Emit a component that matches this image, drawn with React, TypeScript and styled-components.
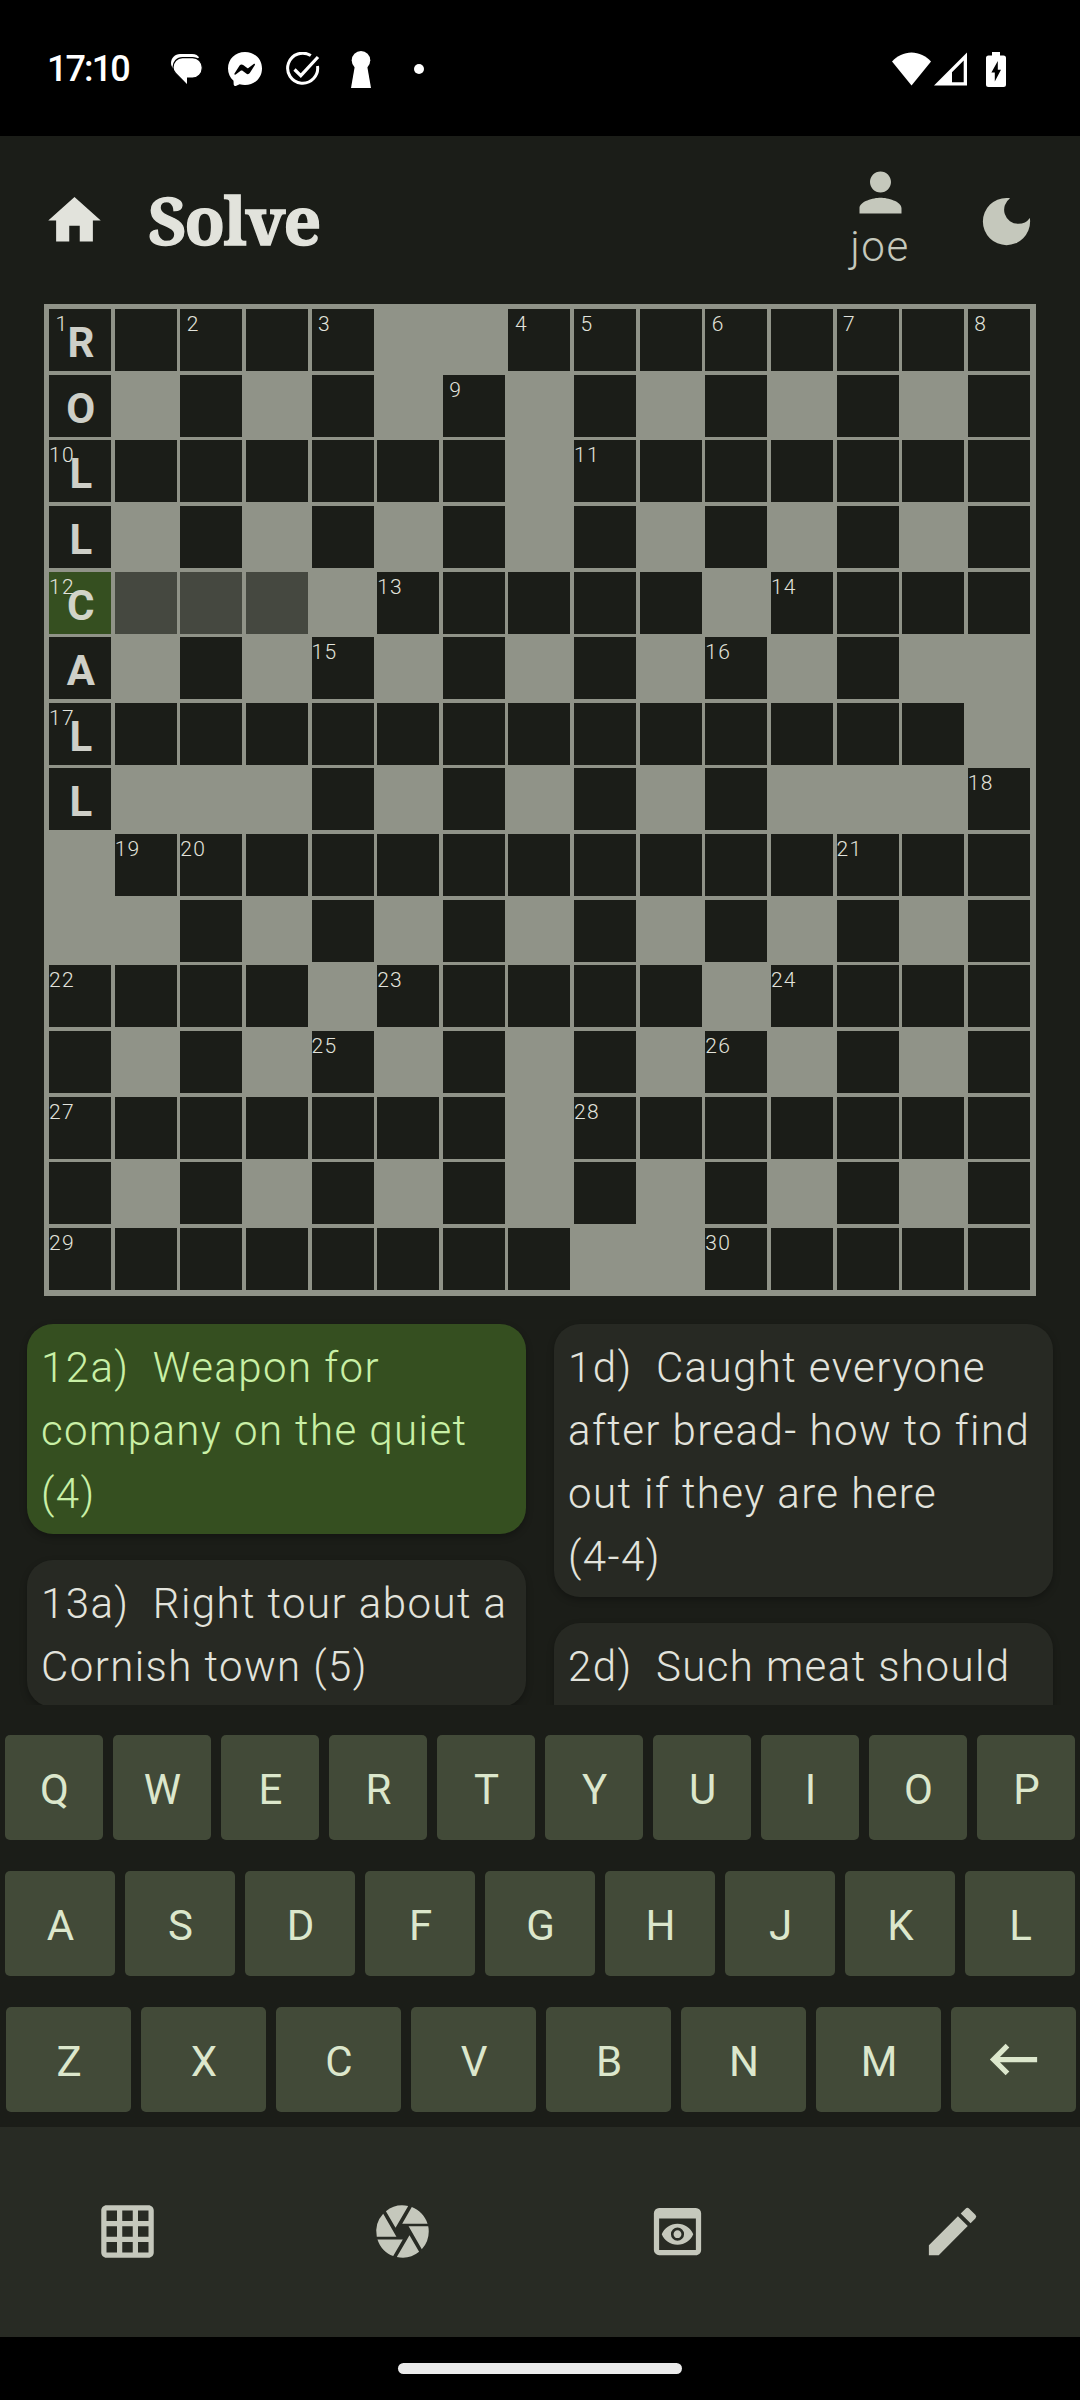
import React from 'react';
import styled, { createGlobalStyle } from 'styled-components';
import {
  MdCamera,
  MdDarkMode,
  MdEdit,
  MdGridOn,
  MdHome,
  MdKeyboardBackspace,
  MdPerson,
  MdPreview,
} from 'react-icons/md';

const color = {
  page: '#1b1d18',
  bar: '#282b24',
  card: '#272923',
  text: '#e2e3dc',
  muted: '#c5c8bc',
  outline: '#909388',
  lit: '#454840',
  selected: '#354f20',
  selectedText: '#c9f0a6',
  key: '#424a38',
  keyText: '#dce7cc',
};

const GlobalStyle = createGlobalStyle`
  * { box-sizing: border-box; }
  body { margin: 0; background: #000; }
`;

const Screen = styled.div`
  display: flex;
  flex-direction: column;
  width: 1080px;
  height: 2400px;
  overflow: hidden;
  background: ${color.page};
  color: ${color.text};
  font-family: Roboto, 'Liberation Sans', sans-serif;
`;

const StatusBar = styled.div`
  display: flex;
  align-items: center;
  justify-content: space-between;
  height: 136px;
  padding: 2px 74px 0 47px;
  background: #000;
  color: #fff;
`;

const StatusGroup = styled.div`
  display: flex;
  align-items: center;
`;

const Clock = styled.span`
  width: 124px;
  font-size: 36px;
  font-weight: 500;
  line-height: 42px;
  letter-spacing: -1.9px;
`;

const Glyph = styled.svg<{ $w: number; $h: number; $gap?: number }>`
  display: block;
  flex: none;
  width: ${(p) => p.$w}px;
  height: ${(p) => p.$h}px;
  margin-left: ${(p) => p.$gap ?? 0}px;
`;

const AppBar = styled.header`
  display: flex;
  align-items: center;
  height: 168px;
  padding: 0 42px 0 43px;
`;

const Title = styled.h1`
  flex: 1;
  margin: 0 0 0 42px;
  padding-bottom: 3px;
  font-family: 'Noto Serif', 'DejaVu Serif Condensed', 'DejaVu Serif', serif;
  font-stretch: condensed;
  font-size: 66px;
  font-weight: 700;
  line-height: 84px;
  letter-spacing: -1.6px;
  -webkit-text-stroke: 1.4px ${color.text};
`;

const Account = styled.div`
  display: flex;
  flex-direction: column;
  align-items: center;
  margin-right: 63px;
  padding-bottom: 11px;
  color: ${color.muted};
  font-size: 42px;
  font-weight: 300;
  letter-spacing: 1.6px;
  line-height: 45px;
`;

const UserName = styled.span`
  padding-right: 1px;
`;

const Moon = styled.div`
  display: flex;
  padding-top: 3px;
  color: ${color.muted};
`;

const Board = styled.div`
  display: grid;
  flex: none;
  grid-template-columns: repeat(15, 65.625px);
  grid-template-rows: repeat(15, 65.625px);
  width: 992px;
  height: 992px;
  margin-left: 44px;
  padding: 5px;
  background: ${color.outline};
`;

type Tone = 'plain' | 'lit' | 'selected';
const toneFill: Record<Tone, string> = {
  plain: color.page,
  lit: color.lit,
  selected: color.selected,
};

const Cell = styled.div<{ $tone: Tone }>`
  position: relative;
  width: 62px;
  height: 62px;
  background: ${(p) => toneFill[p.$tone]};
`;

const CellNumber = styled.span`
  position: absolute;
  left: 0;
  top: 2px;
  width: 26px;
  text-align: center;
  font-size: 21px;
  font-weight: 300;
  letter-spacing: 1.3px;
  line-height: 26px;
`;

const CellLetter = styled.span`
  display: block;
  padding: 3px 0 0 3px;
  text-align: center;
  font-size: 42px;
  font-weight: 700;
  line-height: 62px;
  letter-spacing: 1.3px;
  opacity: 0.9;
`;

const Clues = styled.section`
  display: grid;
  flex: none;
  grid-template-columns: 499px 499px;
  column-gap: 28px;
  height: 409px;
  padding: 28px 27px 0;
  overflow: hidden;
`;

const ClueColumn = styled.div`
  display: flex;
  flex-direction: column;
  gap: 26px;
`;

const Clue = styled.article<{ $selected?: boolean; $lines: number }>`
  flex: none;
  height: ${(p) => p.$lines * 63 + 21}px;
  padding: 12px 8px 9px 14px;
  border-radius: 26px;
  background: ${(p) => (p.$selected ? color.selected : color.card)};
  color: ${(p) => (p.$selected ? color.selectedText : color.text)};
  box-shadow: 0 3px 7px rgba(0, 0, 0, 0.28);
  font-size: 42px;
  font-weight: 300;
  letter-spacing: 1.42px;
  line-height: 63px;
  white-space: pre-wrap;
`;

const Keyboard = styled.div`
  display: flex;
  flex-direction: column;
  flex: none;
  gap: 31px;
  height: 422px;
  padding-top: 30px;
`;

const KeyRow = styled.div<{ $inset: number }>`
  display: flex;
  gap: 10px;
  padding: 0 ${(p) => 10 - p.$inset}px 0 ${(p) => p.$inset}px;
`;

const Key = styled.button`
  display: flex;
  flex: 1;
  align-items: center;
  justify-content: center;
  height: 105px;
  padding: 4px 0 0;
  border: 0;
  border-radius: 5px;
  background: ${color.key};
  color: ${color.keyText};
  font: 400 42px/50px Roboto, 'Liberation Sans', sans-serif;
  text-indent: 1px;
`;

const BackKey = styled(Key)`
  padding: 0;
`;

const BottomBar = styled.nav`
  display: flex;
  flex: none;
  gap: 21px;
  height: 210px;
  background: ${color.bar};
  color: ${color.muted};
`;

const NavItem = styled.div`
  display: flex;
  flex: 1;
  align-items: center;
  justify-content: center;
  padding-bottom: 1px;
`;

const GestureArea = styled.div`
  display: flex;
  flex: none;
  align-items: center;
  justify-content: center;
  height: 63px;
  background: #000;
`;

const Handle = styled.div`
  width: 284px;
  height: 11px;
  border-radius: 6px;
  background: #ebebeb;
`;

const layout = [
  '.....##........',
  '.#.#.#.#.#.#.#.',
  '.......#.......',
  '.#.#.#.#.#.#.#.',
  '....#.....#....',
  '.#.#.#.#.#.#.##',
  '..............#',
  '.###.#.#.#.###.',
  '#..............',
  '##.#.#.#.#.#.#.',
  '....#.....#....',
  '.#.#.#.#.#.#.#.',
  '.......#.......',
  '.#.#.#.#.#.#.#.',
  '........##.....',
];

const letters = 'ROLLCALL';
const isOpen = (r: number, c: number) => layout[r]?.[c] === '.';

interface Square {
  open: boolean;
  number?: number;
  letter?: string;
  tone: Tone;
}

function buildSquares(): Square[] {
  let next = 1;
  const squares: Square[] = [];
  for (let r = 0; r < 15; r++) {
    for (let c = 0; c < 15; c++) {
      const open = isOpen(r, c);
      const startsAcross = open && !isOpen(r, c - 1) && isOpen(r, c + 1);
      const startsDown = open && !isOpen(r - 1, c) && isOpen(r + 1, c);
      squares.push({
        open,
        number: startsAcross || startsDown ? next++ : undefined,
        letter: c === 0 ? letters[r] : undefined,
        tone: r === 4 && c === 0 ? 'selected' : r === 4 && c < 4 ? 'lit' : 'plain',
      });
    }
  }
  return squares;
}

const squares = buildSquares();

function StatusIcons() {
  return (
    <>
      <Glyph $w={32} $h={31} viewBox="0 0 32 31">
        <path fill="#fff" d="M9 0H21C25 0 27 1.6 28 3.8L5 14 2.4 15C.8 13.200 0 11 0 9 0 4 4 0 9 0Z" />
        <path
          fill="#fff"
          stroke="#000"
          strokeWidth="1.200"
          d="M11.500 3.600H21.500C27 3.600 31.300 8 31.300 13.800S27 24 21.500 24H16.600V31.500L4.500 19.200C3 17.700 2 15.800 2 13.500 2 8 6 3.600 11.500 3.600Z"
        />
      </Glyph>
      <Glyph $w={34} $h={34} $gap={25} viewBox="0 0 34 34">
        <path fill="#fff" d="M17 0C7.300 0 0 7 0 16.500c0 5 2 9.200 5.500 12.200l.2 3.900c.1 1.100 1.100 1.700 2.100 1.300l3.800-1.600c1.700.5 3.500.7 5.400.7 9.700 0 17-7 17-16.500S26.700 0 17 0Z" />
        <path fill="#000" d="M6.500 21.500l5.100-7.900c.8-1.300 2.400-1.500 3.600-.6l4 3c.4.3.8.3 1.200 0l5.300-4c.8-.5 1.700.3 1.200 1.100l-5.100 7.900c-.8 1.300-2.400 1.500-3.600.6l-4-3c-.4-.3-.8-.3-1.200 0l-5.300 4c-.8.500-1.700-.3-1.200-1.100Z" />
      </Glyph>
      <Glyph $w={34} $h={34} $gap={24} viewBox="0 0 34 34">
        <path fill="none" stroke="#fff" strokeWidth="3" d="M24.800 3.600A15 15 0 1 0 31.500 14" />
        <path fill="none" stroke="#fff" strokeWidth="3.200" d="M8.500 17.500L14.800 23.700 32 5" />
      </Glyph>
      <Glyph $w={20} $h={37} $gap={31} viewBox="0 0 20 37">
        <circle cx="10" cy="9.300" r="9.300" fill="#fff" />
        <path fill="#fff" d="M4 14H16L20 37H0Z" />
      </Glyph>
      <Glyph $w={10} $h={10} $gap={43} viewBox="0 0 10 10">
        <circle cx="5" cy="5" r="5" fill="#fff" />
      </Glyph>
    </>
  );
}

function SystemIcons() {
  return (
    <>
      <Glyph $w={39} $h={34} viewBox="0 0 39 34">
        <path fill="#fff" d="M0 9.500C5 4 12 .5 19.500 .5S34 4 39 9.500L19.500 33.500Z" />
      </Glyph>
      <Glyph $w={33} $h={34} $gap={3} viewBox="0 0 33 34">
        <path fill="#fff" fillRule="evenodd" d="M33 .5V33.500H0ZM29.700 8.500L18 20.200V30.200H29.700Z" />
      </Glyph>
      <Glyph $w={20} $h={35} $gap={19} viewBox="0 0 20 35">
        <path fill="#fff" d="M6 0H14V3.500H17.500Q20 3.500 20 6V32.500Q20 35 17.500 35H2.500Q0 35 0 32.500V6Q0 3.500 2.500 3.500H6Z" />
        <path fill="#000" d="M11.800 9L5.400 20.500H8.800V29.500L15 17.700H11.800Z" />
      </Glyph>
    </>
  );
}

export default function App() {
  return (
    <Screen>
      <GlobalStyle />
      <StatusBar>
        <StatusGroup>
          <Clock>17:10</Clock>
          <StatusIcons />
        </StatusGroup>
        <StatusGroup>
          <SystemIcons />
        </StatusGroup>
      </StatusBar>

      <AppBar>
        <MdHome size={63} />
        <Title>Solve</Title>
        <Account>
          <MdPerson size={63} />
          <UserName>joe</UserName>
        </Account>
        <Moon>
          <MdDarkMode size={63} />
        </Moon>
      </AppBar>

      <Board>
        {squares.map((s, i) =>
          s.open ? (
            <Cell key={i} $tone={s.tone}>
              {s.letter && <CellLetter>{s.letter}</CellLetter>}
              {s.number && <CellNumber>{s.number}</CellNumber>}
            </Cell>
          ) : (
            <span key={i} />
          ),
        )}
      </Board>

      <Clues>
        <ClueColumn>
          <Clue $selected $lines={3}>{'12a)  Weapon for company on the quiet (4)'}</Clue>
          <Clue $lines={2}>{'13a)  Right tour about a Cornish town (5)'}</Clue>
        </ClueColumn>
        <ClueColumn>
          <Clue $lines={4}>{'1d)  Caught everyone after bread- how to find out if they are here\n(4-4)'}</Clue>
          <Clue $lines={3}>{'2d)  Such meat should'}</Clue>
        </ClueColumn>
      </Clues>

      <Keyboard>
        <KeyRow $inset={5}>
          {[...'QWERTYUIOP'].map((k) => (
            <Key key={k}>{k}</Key>
          ))}
        </KeyRow>
        <KeyRow $inset={5}>
          {[...'ASDFGHJKL'].map((k) => (
            <Key key={k}>{k}</Key>
          ))}
        </KeyRow>
        <KeyRow $inset={6}>
          {[...'ZXCVBNM'].map((k) => (
            <Key key={k}>{k}</Key>
          ))}
          <BackKey aria-label="Backspace">
            <MdKeyboardBackspace size={63} />
          </BackKey>
        </KeyRow>
      </Keyboard>

      <BottomBar>
        {[MdGridOn, MdCamera, MdPreview, MdEdit].map((Icon, i) => (
          <NavItem key={i}>
            <Icon size={63} />
          </NavItem>
        ))}
      </BottomBar>

      <GestureArea>
        <Handle />
      </GestureArea>
    </Screen>
  );
}
